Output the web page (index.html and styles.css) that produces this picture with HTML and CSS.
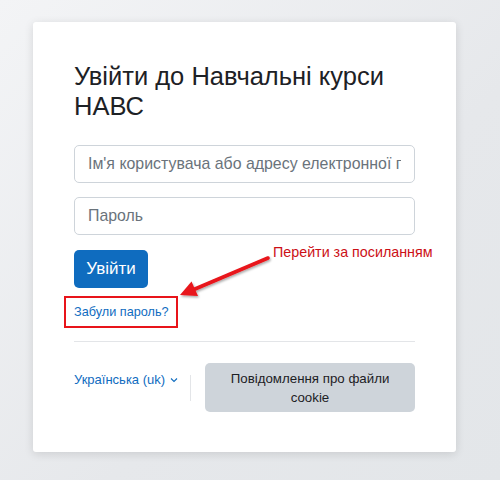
FILE: index.html
```html
<!DOCTYPE html>
<html lang="uk">
<head>
    <meta charset="UTF-8">
    <meta name="viewport" content="width=device-width, initial-scale=1.0">
    <title>Увійти до Навчальні курси НАВС</title>
    <link rel="stylesheet" href="styles.css">
</head>
<body>
    <div class="login-card">
        <h1 class="login-title">Увійти до Навчальні курси НАВС</h1>
        <form class="login-form" action="#" method="post">
            <input type="text" class="form-input" name="username" placeholder="Ім'я користувача або адресу електронної пошти">
            <input type="password" class="form-input" name="password" placeholder="Пароль">
            <button type="submit" class="btn-login">Увійти</button>
        </form>
        <div class="forgot-row">
            <a href="#" class="forgot-link">Забули пароль?</a>
        </div>
        <div class="divider"></div>
        <div class="footer-row">
            <a href="#" class="lang-link">Українська (uk)
                <svg class="chevron" width="8" height="6" viewBox="0 0 8 6"><path d="M1 1.5 L4 4.5 L7 1.5" fill="none" stroke="#0f6cbf" stroke-width="1.1"/></svg>
            </a>
            <span class="vsep"></span>
            <button type="button" class="btn-cookie">Повідомлення про файли cookie</button>
        </div>

        <div class="note">Перейти за посиланням</div>
        <svg class="arrow" width="110" height="60" viewBox="0 0 110 60">
            <defs>
                <filter id="sh" x="-20%" y="-20%" width="140%" height="140%">
                    <feDropShadow dx="1" dy="1.5" stdDeviation="1.2" flood-color="#000" flood-opacity="0.35"/>
                </filter>
            </defs>
            <g filter="url(#sh)">
                <line x1="95" y1="6" x2="22" y2="37" stroke="#e8141a" stroke-width="3.6" stroke-linecap="round"/>
                <path d="M7 43 L18.5 29.5 L25 44 Z" fill="#e8141a"/>
            </g>
        </svg>
    </div>
</body>
</html>
```

FILE: styles.css
```css
body {
    margin: 0;
    background: linear-gradient(135deg, #f3f4f6 0%, #e6e8eb 60%, #e3e6e9 100%);
    font-family: "Liberation Sans", Arial, sans-serif;
    height: 480px;
    overflow: hidden;
}
.login-card {
    position: relative;
    margin: 22px 0 0 33px;
    width: 423px;
    height: 430px;
    box-sizing: border-box;
    padding: 39px 41px 0 41px;
    background-color: #ffffff;
    border-radius: 3px;
    box-shadow: 0 2px 10px rgba(0, 0, 0, 0.12);
}
.login-title {
    margin: 0;
    font-weight: normal;
    font-size: 25.5px;
    line-height: 30px;
    color: #1d2125;
    width: 330px;
}
.login-form {
    display: flex;
    flex-direction: column;
    align-items: flex-start;
    margin-top: 24px;
}
.form-input {
    width: 100%;
    height: 38px;
    box-sizing: border-box;
    padding: 6px 13px;
    border: 1px solid #ced4da;
    border-radius: 5px;
    font-family: "Liberation Sans", Arial, sans-serif;
    font-size: 15.9px;
    color: #495057;
    margin-bottom: 14px;
}
.form-input::placeholder {
    color: #6a737b;
}
.btn-login {
    margin-top: 1px;
    width: 74px;
    height: 38px;
    border: none;
    border-radius: 5px;
    background-color: #0f6cbf;
    color: #ffffff;
    font-family: "Liberation Sans", Arial, sans-serif;
    font-size: 17px;
    cursor: pointer;
}
.forgot-row {
    margin-top: 7px;
    height: 33px;
    display: flex;
    align-items: center;
}
.forgot-link {
    position: relative;
    font-size: 12.7px;
    color: #0f6cbf;
    text-decoration: none;
}
.forgot-link::after {
    content: "";
    position: absolute;
    left: -10px;
    right: -9px;
    top: -9px;
    bottom: -9px;
    border: 2px solid #e8141a;
}
.divider {
    margin-top: 13px;
    border-top: 1px solid #e3e5e8;
}
.footer-row {
    margin-top: 21px;
    display: flex;
    align-items: center;
}
.lang-link {
    align-self: flex-start;
    margin-top: 9px;
    font-size: 13px;
    color: #0f6cbf;
    text-decoration: none;
    display: flex;
    align-items: center;
    gap: 5px;
}
.chevron {
    margin-top: 1px;
}
.vsep {
    width: 1px;
    height: 26px;
    background-color: #e3e5e8;
    margin: 0 14px 0 12px;
}
.btn-cookie {
    flex: 1;
    height: 49px;
    border: none;
    border-radius: 5px;
    background-color: #ced4da;
    color: #1d2125;
    font-family: "Liberation Sans", Arial, sans-serif;
    font-size: 13.3px;
    line-height: 19px;
    padding: 4px 14px;
}
.note {
    position: absolute;
    left: 240px;
    top: 222px;
    font-size: 14.3px;
    color: #cc1016;
}
.arrow {
    position: absolute;
    left: 140px;
    top: 230px;
}
```
